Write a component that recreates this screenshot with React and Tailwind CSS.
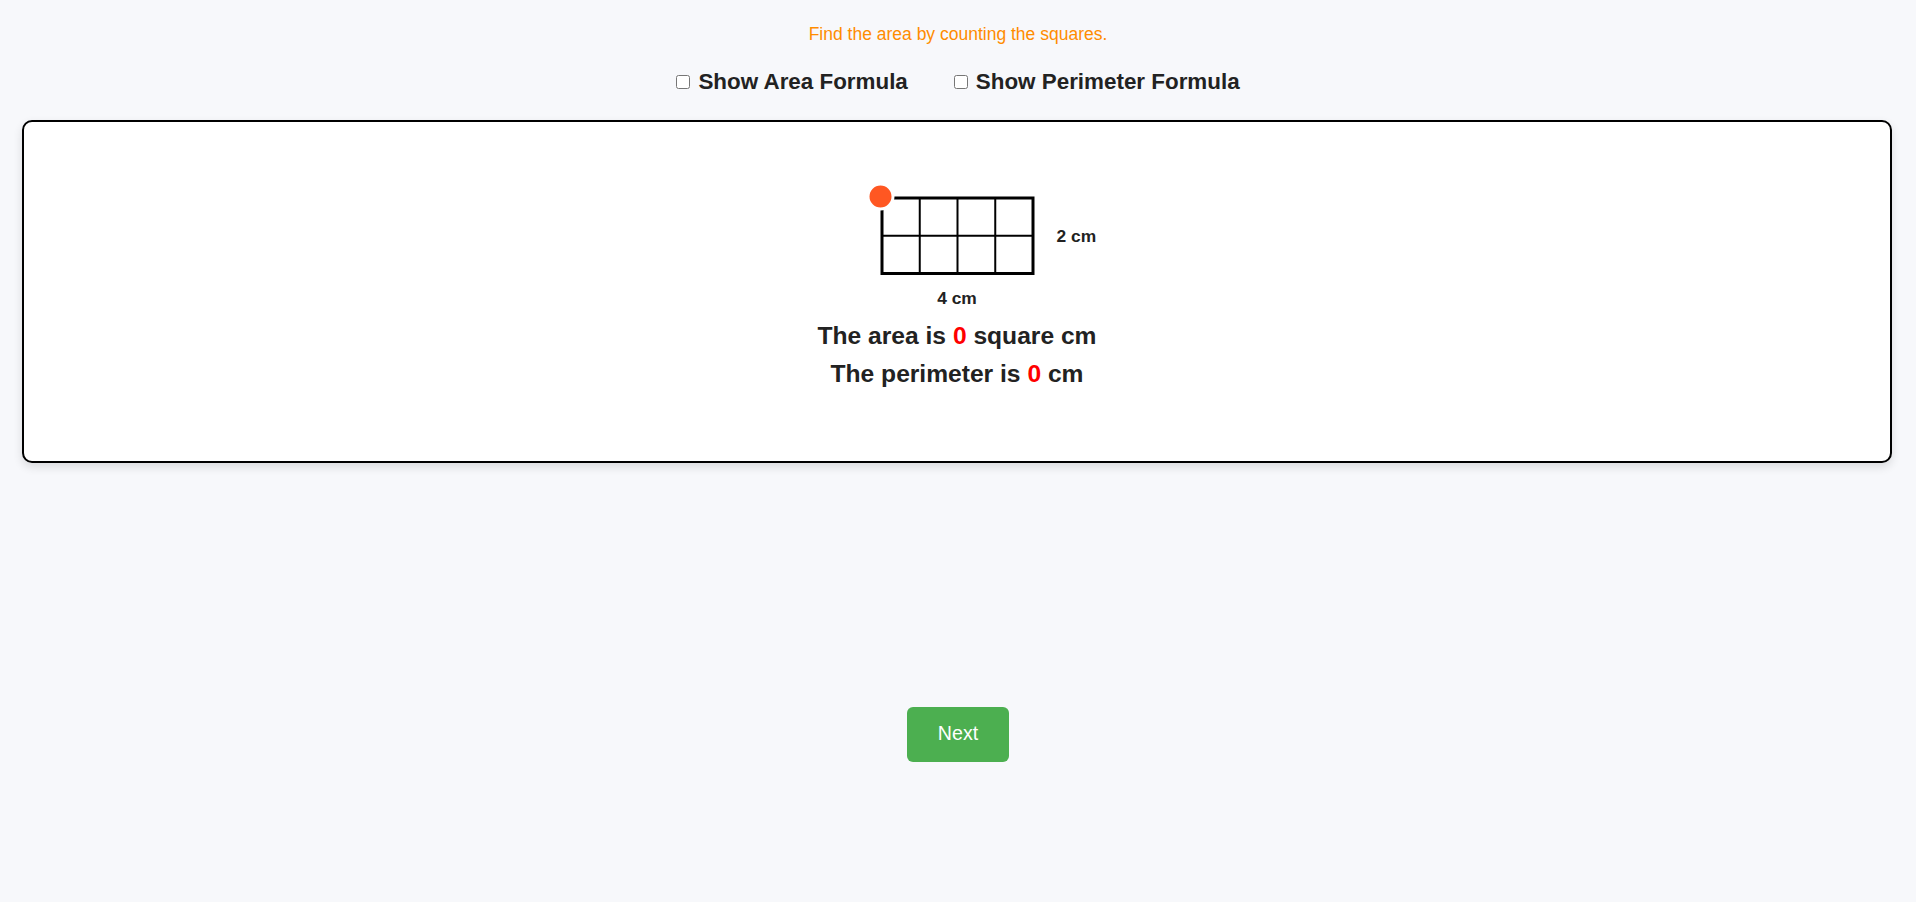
import React, { useState } from 'react';

const CELL = 37.75;
const COLS = 4;
const ROWS = 2;

/** Grid of unit squares with the orange start dot on the top-left corner. */
const AreaGrid = () => {
  const w = CELL * COLS;
  const h = CELL * ROWS;
  const pad = 15;
  return (
    <svg width={w + pad * 2} height={h + pad * 2} viewBox={`0 0 ${w + pad * 2} ${h + pad * 2}`}>
      {Array.from({ length: COLS - 1 }, (_, i) => (
        <line key={`v${i}`} x1={pad + CELL * (i + 1)} y1={pad} x2={pad + CELL * (i + 1)} y2={pad + h} stroke="#000" strokeWidth="2" />
      ))}
      {Array.from({ length: ROWS - 1 }, (_, i) => (
        <line key={`h${i}`} x1={pad} y1={pad + CELL * (i + 1)} x2={pad + w} y2={pad + CELL * (i + 1)} stroke="#000" strokeWidth="2" />
      ))}
      <rect x={pad} y={pad} width={w} height={h} fill="none" stroke="#000" strokeWidth="3" />
      <circle cx={pad - 1.5} cy={pad - 1.5} r="12.5" fill="#ff5722" stroke="#fff" strokeWidth="3" />
    </svg>
  );
};

const App = () => {
  const [showArea, setShowArea] = useState(false);
  const [showPerimeter, setShowPerimeter] = useState(false);

  return (
    <div className="min-h-screen bg-[#f7f8fb] font-['Liberation_Sans',Arial,sans-serif] text-[#222] pt-[24px]">
      <p className="text-center text-[17.5px] leading-[20px] text-[#ff8c00]">Find the area by counting the squares.</p>

      <div className="mt-[25px] flex justify-center gap-[46px] text-[22.4px] leading-[26px] font-bold">
        <label className="flex items-center">
          <input type="checkbox" checked={showArea} onChange={(e) => setShowArea(e.target.checked)} className="w-[14px] h-[14px] m-0 mr-[8px]" />
          Show Area Formula
        </label>
        <label className="flex items-center">
          <input type="checkbox" checked={showPerimeter} onChange={(e) => setShowPerimeter(e.target.checked)} className="w-[14px] h-[14px] m-0 mr-[8px]" />
          Show Perimeter Formula
        </label>
      </div>

      <div className="mt-[25px] ml-[22px] mr-[24px] bg-white border-2 border-black rounded-[10px] shadow-[0_4px_10px_rgba(0,0,0,0.12)] pt-[61px] pb-[68px]">
        <div className="grid grid-cols-[1fr_auto_1fr] items-center">
          <div></div>
          <AreaGrid />
          <span className="pl-[9px] text-[17.4px] leading-[20px] font-bold">2 cm</span>
        </div>
        <p className="-mt-[1px] text-center text-[17.4px] leading-[20px] font-bold">4 cm</p>
        <div className="mt-[9px] text-center text-[24.6px] leading-[38px] font-bold">
          <p>The area is <span className="text-[#ff0000]">0</span> square cm</p>
          <p>The perimeter is <span className="text-[#ff0000]">0</span> cm</p>
        </div>
      </div>

      <div className="mt-[244px] flex justify-center">
        <button type="button" className="w-[102px] h-[55px] rounded-[6px] bg-[#4caf50] text-white text-[19.6px] flex items-center justify-center">
          Next
        </button>
      </div>
    </div>
  );
};

export default App;
